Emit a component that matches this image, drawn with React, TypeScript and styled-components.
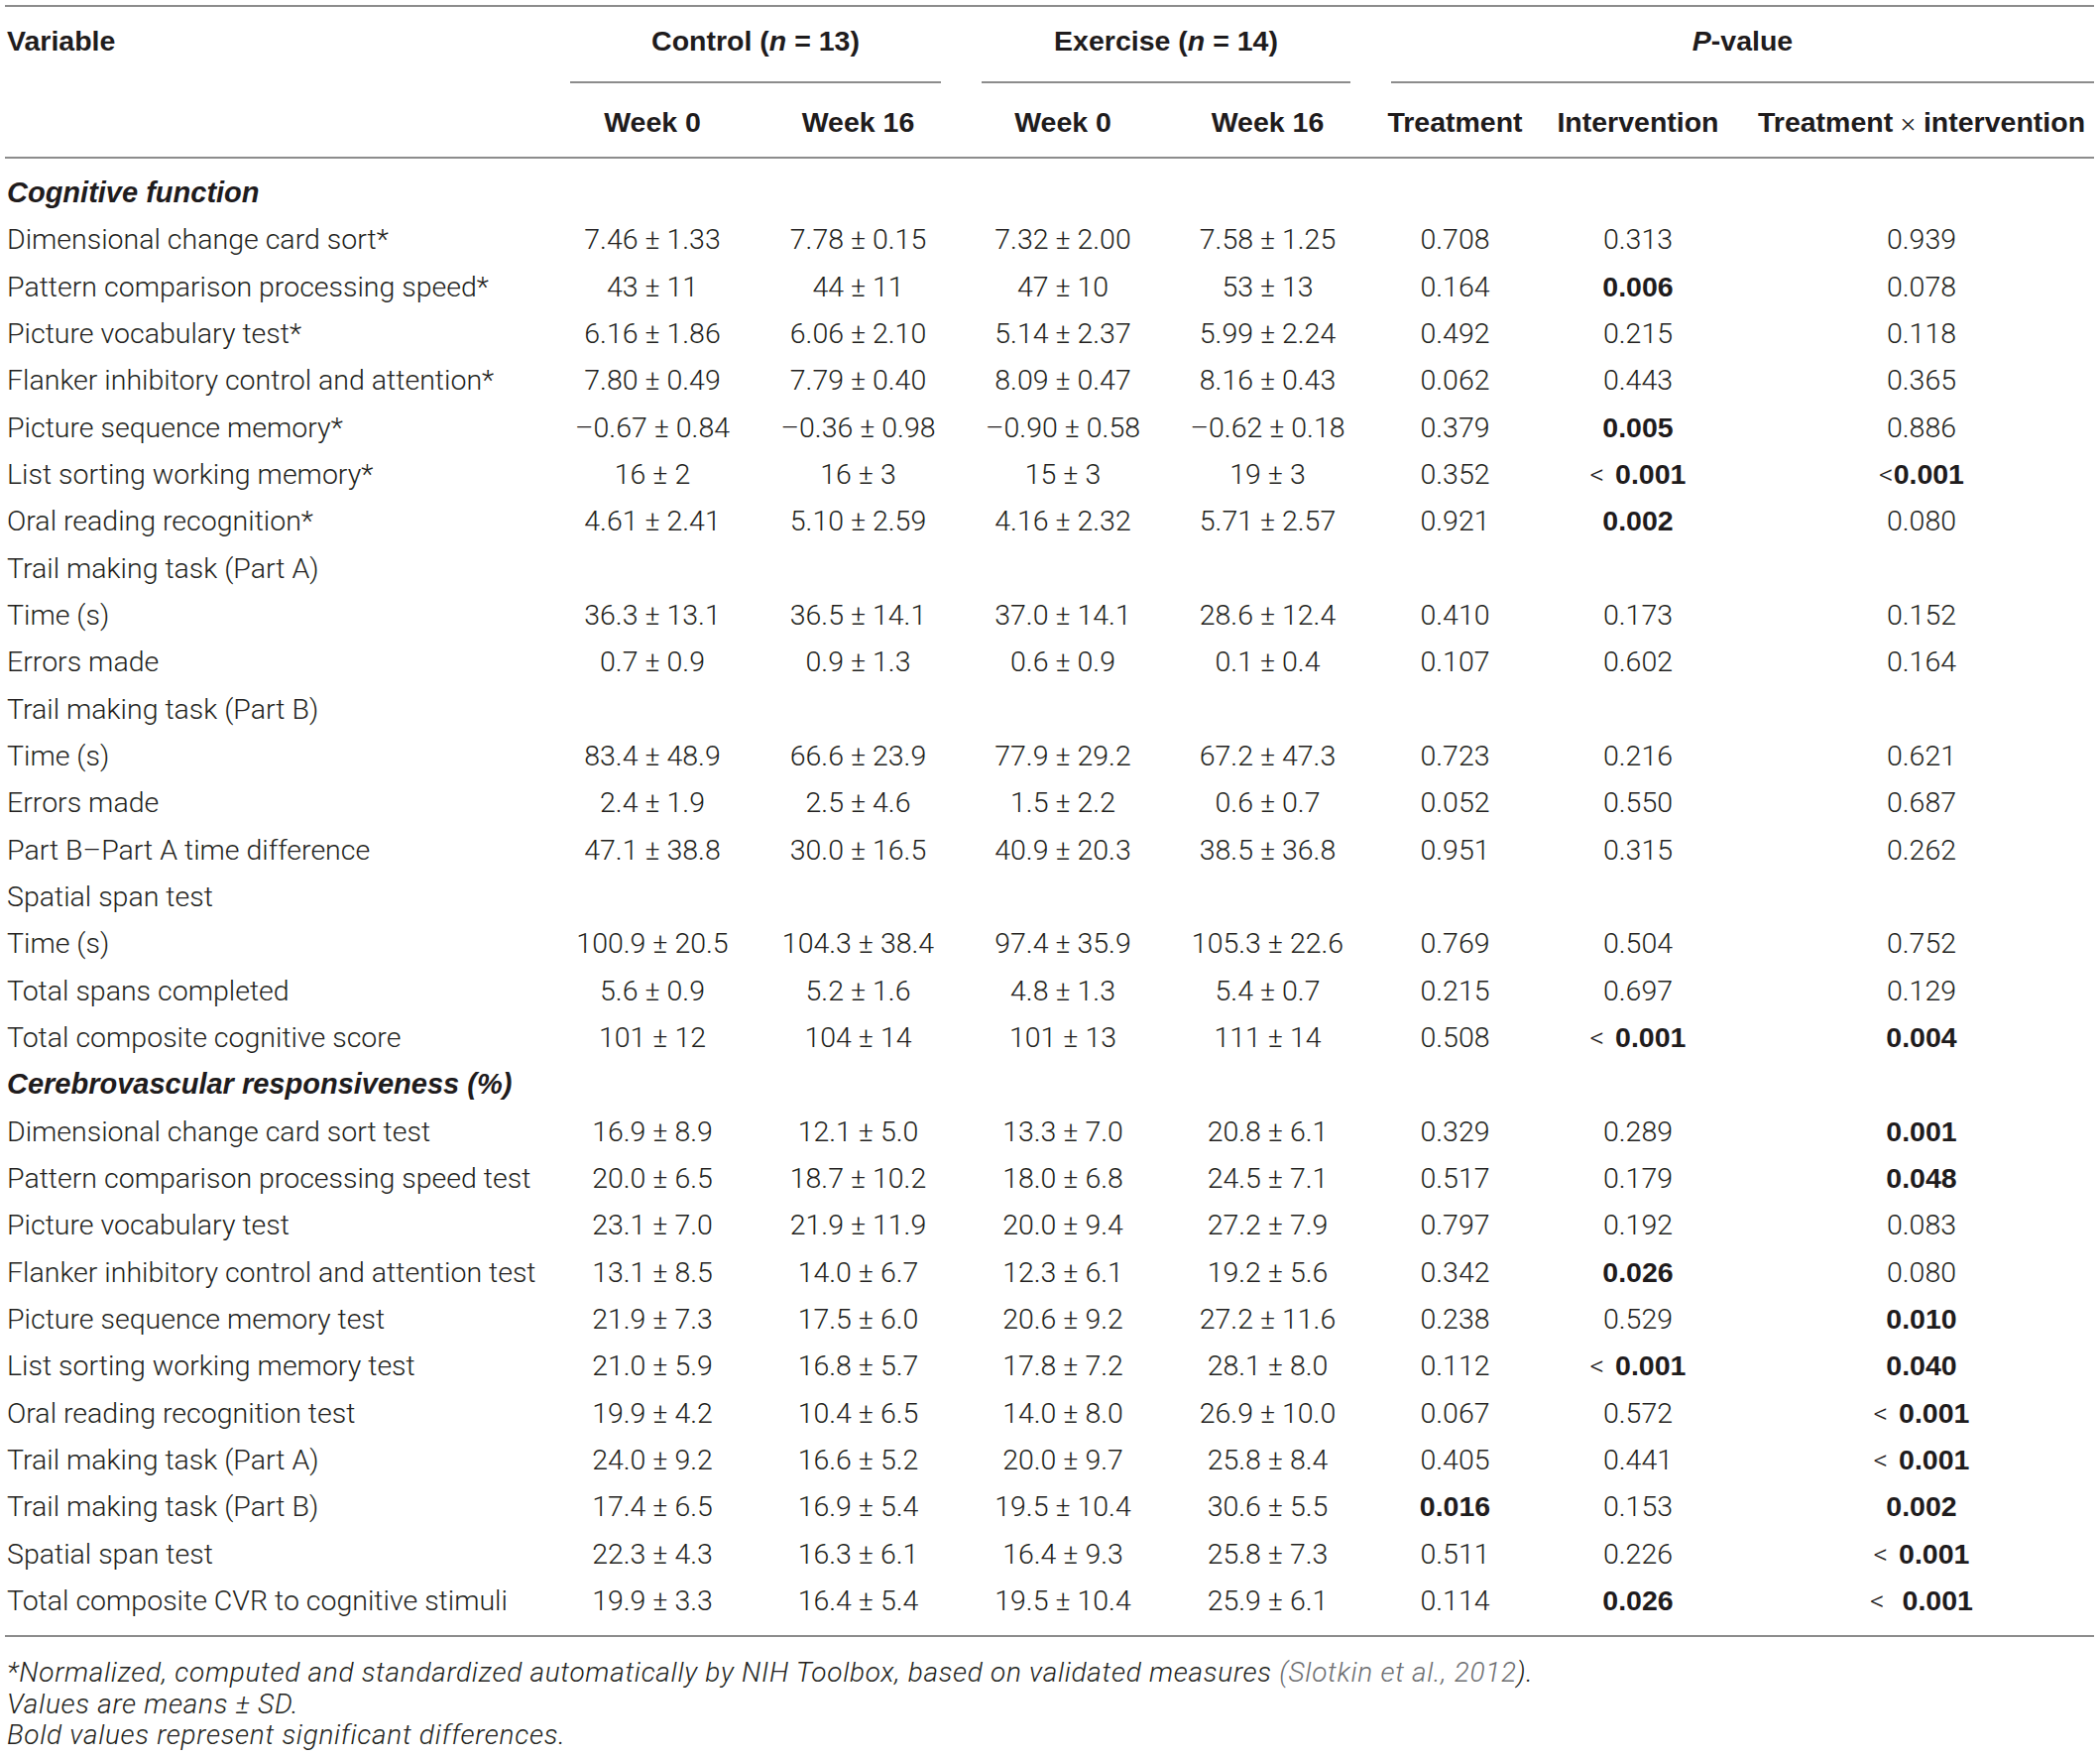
import React from "react";
import styled, { createGlobalStyle } from "styled-components";

const GlobalStyle = createGlobalStyle`
  html, body {
    margin: 0;
    padding: 0;
    background: #ffffff;
  }
  body {
    font-family: Roboto, "Liberation Sans", Arial, sans-serif;
    color: #231f20;
    overflow: hidden;
  }
`;

const COLS = "549px 208px 207px 206px 207px 171px 198px 361px";
const LINE = "2px solid #8c8c8c";
const BOLD_FONT = `"Liberation Sans", Arial, Helvetica, sans-serif`;
const LIGHT_FONT = `Roboto, "Liberation Sans", Arial, sans-serif`;

const Page = styled.div`
  padding: 5px 6px 0 5px;
  width: 2107px;
`;

const Table = styled.div`
  width: 2107px;
  border-top: ${LINE};
`;

const HeadGrid = styled.div`
  display: grid;
  grid-template-columns: ${COLS};
  grid-template-rows: 77px 74px;
  border-bottom: ${LINE};
`;

const HeadCell = styled.div<{ $col: string; $row: number; $align?: string; $padLeft?: number }>`
  grid-column: ${(p) => p.$col};
  grid-row: ${(p) => p.$row};
  align-self: center;
  text-align: ${(p) => p.$align || "center"};
  padding-left: ${(p) => p.$padLeft ?? 0}px;
  margin-top: ${(p) => (p.$row === 1 ? -10 : 4)}px;
  font-family: ${BOLD_FONT};
  font-weight: 700;
  font-size: 28.5px;
  line-height: 34px;
  color: #1f1c1d;
  white-space: nowrap;
`;

const GroupCell = styled.div<{ $col: string; $right?: number }>`
  grid-column: ${(p) => p.$col};
  grid-row: 1;
  margin: 0 ${(p) => p.$right ?? 20}px 0 21px;
  border-bottom: ${LINE};
  display: flex;
  align-items: center;
  justify-content: center;
  padding-bottom: 6px;
  font-family: ${BOLD_FONT};
  font-weight: 700;
  font-size: 28.5px;
  color: #1f1c1d;
  white-space: nowrap;
`;

const GroupText = styled.span`
  white-space: nowrap;
`;

const Body = styled.div`
  padding: 11px 0 11px;
  border-bottom: ${LINE};
`;

const Row = styled.div`
  display: grid;
  grid-template-columns: ${COLS};
  height: 47.33px;
  align-items: center;
`;

const VarCell = styled.div<{ $section?: boolean }>`
  padding-left: 2px;
  font-family: ${(p) => (p.$section ? BOLD_FONT : LIGHT_FONT)};
  font-size: ${(p) => (p.$section ? "29px" : "28.5px")};
  font-weight: ${(p) => (p.$section ? 700 : 300)};
  font-style: ${(p) => (p.$section ? "italic" : "normal")};
  color: ${(p) => (p.$section ? "#1f1c1d" : "#231f20")};
  white-space: nowrap;
`;

const ValCell = styled.div<{ $bold?: boolean; $padLeft?: number }>`
  text-align: center;
  padding-left: ${(p) => p.$padLeft ?? 0}px;
  font-family: ${(p) => (p.$bold ? BOLD_FONT : LIGHT_FONT)};
  font-size: 28.5px;
  font-weight: ${(p) => (p.$bold ? 700 : 300)};
  color: ${(p) => (p.$bold ? "#1f1c1d" : "#231f20")};
  white-space: pre;
`;

const Lt = styled.span<{ $gap?: number }>`
  font-family: ${LIGHT_FONT};
  font-weight: 300;
  margin-right: ${(p) => p.$gap ?? 0}px;
`;

const Notes = styled.div`
  padding: 20px 0 0 2px;
  font-size: 28px;
  letter-spacing: 0.7px;
  font-style: italic;
  font-weight: 300;
  line-height: 31.5px;
  white-space: nowrap;
`;

const Cite = styled.span`
  color: #6d6e71;
`;

type RowData = {
  label: string;
  section?: boolean;
  v?: string[];
  p?: string[];
};

const rows: RowData[] = [
  { label: "Cognitive function", section: true },
  { label: "Dimensional change card sort*", v: ["7.46 ± 1.33", "7.78 ± 0.15", "7.32 ± 2.00", "7.58 ± 1.25"], p: ["0.708", "0.313", "0.939"] },
  { label: "Pattern comparison processing speed*", v: ["43 ± 11", "44 ± 11", "47 ± 10", "53 ± 13"], p: ["0.164", "**0.006", "0.078"] },
  { label: "Picture vocabulary test*", v: ["6.16 ± 1.86", "6.06 ± 2.10", "5.14 ± 2.37", "5.99 ± 2.24"], p: ["0.492", "0.215", "0.118"] },
  { label: "Flanker inhibitory control and attention*", v: ["7.80 ± 0.49", "7.79 ± 0.40", "8.09 ± 0.47", "8.16 ± 0.43"], p: ["0.062", "0.443", "0.365"] },
  { label: "Picture sequence memory*", v: ["–0.67 ± 0.84", "–0.36 ± 0.98", "–0.90 ± 0.58", "–0.62 ± 0.18"], p: ["0.379", "**0.005", "0.886"] },
  { label: "List sorting working memory*", v: ["16 ± 2", "16 ± 3", "15 ± 3", "19 ± 3"], p: ["0.352", "**< 0.001", "**<0.001"] },
  { label: "Oral reading recognition*", v: ["4.61 ± 2.41", "5.10 ± 2.59", "4.16 ± 2.32", "5.71 ± 2.57"], p: ["0.921", "**0.002", "0.080"] },
  { label: "Trail making task (Part A)" },
  { label: "Time (s)", v: ["36.3 ± 13.1", "36.5 ± 14.1", "37.0 ± 14.1", "28.6 ± 12.4"], p: ["0.410", "0.173", "0.152"] },
  { label: "Errors made", v: ["0.7 ± 0.9", "0.9 ± 1.3", "0.6 ± 0.9", "0.1 ± 0.4"], p: ["0.107", "0.602", "0.164"] },
  { label: "Trail making task (Part B)" },
  { label: "Time (s)", v: ["83.4 ± 48.9", "66.6 ± 23.9", "77.9 ± 29.2", "67.2 ± 47.3"], p: ["0.723", "0.216", "0.621"] },
  { label: "Errors made", v: ["2.4 ± 1.9", "2.5 ± 4.6", "1.5 ± 2.2", "0.6 ± 0.7"], p: ["0.052", "0.550", "0.687"] },
  { label: "Part B–Part A time difference", v: ["47.1 ± 38.8", "30.0 ± 16.5", "40.9 ± 20.3", "38.5 ± 36.8"], p: ["0.951", "0.315", "0.262"] },
  { label: "Spatial span test" },
  { label: "Time (s)", v: ["100.9 ± 20.5", "104.3 ± 38.4", "97.4 ± 35.9", "105.3 ± 22.6"], p: ["0.769", "0.504", "0.752"] },
  { label: "Total spans completed", v: ["5.6 ± 0.9", "5.2 ± 1.6", "4.8 ± 1.3", "5.4 ± 0.7"], p: ["0.215", "0.697", "0.129"] },
  { label: "Total composite cognitive score", v: ["101 ± 12", "104 ± 14", "101 ± 13", "111 ± 14"], p: ["0.508", "**< 0.001", "**0.004"] },
  { label: "Cerebrovascular responsiveness (%)", section: true },
  { label: "Dimensional change card sort test", v: ["16.9 ± 8.9", "12.1 ± 5.0", "13.3 ± 7.0", "20.8 ± 6.1"], p: ["0.329", "0.289", "**0.001"] },
  { label: "Pattern comparison processing speed test", v: ["20.0 ± 6.5", "18.7 ± 10.2", "18.0 ± 6.8", "24.5 ± 7.1"], p: ["0.517", "0.179", "**0.048"] },
  { label: "Picture vocabulary test", v: ["23.1 ± 7.0", "21.9 ± 11.9", "20.0 ± 9.4", "27.2 ± 7.9"], p: ["0.797", "0.192", "0.083"] },
  { label: "Flanker inhibitory control and attention test", v: ["13.1 ± 8.5", "14.0 ± 6.7", "12.3 ± 6.1", "19.2 ± 5.6"], p: ["0.342", "**0.026", "0.080"] },
  { label: "Picture sequence memory test", v: ["21.9 ± 7.3", "17.5 ± 6.0", "20.6 ± 9.2", "27.2 ± 11.6"], p: ["0.238", "0.529", "**0.010"] },
  { label: "List sorting working memory test", v: ["21.0 ± 5.9", "16.8 ± 5.7", "17.8 ± 7.2", "28.1 ± 8.0"], p: ["0.112", "**< 0.001", "**0.040"] },
  { label: "Oral reading recognition test", v: ["19.9 ± 4.2", "10.4 ± 6.5", "14.0 ± 8.0", "26.9 ± 10.0"], p: ["0.067", "0.572", "**< 0.001"] },
  { label: "Trail making task (Part A)", v: ["24.0 ± 9.2", "16.6 ± 5.2", "20.0 ± 9.7", "25.8 ± 8.4"], p: ["0.405", "0.441", "**< 0.001"] },
  { label: "Trail making task (Part B)", v: ["17.4 ± 6.5", "16.9 ± 5.4", "19.5 ± 10.4", "30.6 ± 5.5"], p: ["**0.016", "0.153", "**0.002"] },
  { label: "Spatial span test", v: ["22.3 ± 4.3", "16.3 ± 6.1", "16.4 ± 9.3", "25.8 ± 7.3"], p: ["0.511", "0.226", "**< 0.001"] },
  { label: "Total composite CVR to cognitive stimuli", v: ["19.9 ± 3.3", "16.4 ± 5.4", "19.5 ± 10.4", "25.9 ± 6.1"], p: ["0.114", "**0.026", "**<  0.001"] },
];

function PValue({ raw, padLeft }: { raw: string; padLeft?: number }) {
  const bold = raw.startsWith("**");
  const text = bold ? raw.slice(2) : raw;
  if (text.startsWith("<")) {
    const m = text.match(/^<(\s*)(.*)$/);
    const gap = m ? m[1] : "";
    const num = m ? m[2] : text;
    return (
      <ValCell $bold={bold} $padLeft={padLeft}>
        <Lt $gap={gap.length > 0 ? 4 : 0}>{"<" + gap}</Lt>
        {num}
      </ValCell>
    );
  }
  return (
    <ValCell $bold={bold} $padLeft={padLeft}>
      {text}
    </ValCell>
  );
}

export default function App() {
  return (
    <>
      <GlobalStyle />
      <Page>
        <Table>
          <HeadGrid>
            <HeadCell $col="1" $row={1} $align="left" $padLeft={2}>
              Variable
            </HeadCell>
            <GroupCell $col="2 / 4">
              <GroupText>
                Control (<i>n</i> = 13)
              </GroupText>
            </GroupCell>
            <GroupCell $col="4 / 6">
              <GroupText>
                Exercise (<i>n</i> = 14)
              </GroupText>
            </GroupCell>
            <GroupCell $col="6 / 9" $right={0}>
              <GroupText>
                <i>P</i>-value
              </GroupText>
            </GroupCell>
            <HeadCell $col="2" $row={2}>Week 0</HeadCell>
            <HeadCell $col="3" $row={2}>Week 16</HeadCell>
            <HeadCell $col="4" $row={2}>Week 0</HeadCell>
            <HeadCell $col="5" $row={2}>Week 16</HeadCell>
            <HeadCell $col="6" $row={2}>Treatment</HeadCell>
            <HeadCell $col="7" $row={2}>Intervention</HeadCell>
            <HeadCell $col="8" $row={2} $padLeft={13}>
              Treatment <Lt>×</Lt> intervention
            </HeadCell>
          </HeadGrid>
          <Body>
            {rows.map((r, i) => (
              <Row key={i}>
                <VarCell $section={r.section}>{r.label}</VarCell>
                {r.v && r.v.map((v, j) => <ValCell key={j}>{v}</ValCell>)}
                {r.p &&
                  r.p.map((p, j) => (
                    <PValue key={"p" + j} raw={p} padLeft={j === 2 ? 13 : 0} />
                  ))}
              </Row>
            ))}
          </Body>
        </Table>
        <Notes>
          <div>
            *Normalized, computed and standardized automatically by NIH Toolbox, based on validated measures{" "}
            <Cite>(Slotkin et al., 2012</Cite>).
          </div>
          <div>Values are means ± SD.</div>
          <div>Bold values represent significant differences.</div>
        </Notes>
      </Page>
    </>
  );
}
